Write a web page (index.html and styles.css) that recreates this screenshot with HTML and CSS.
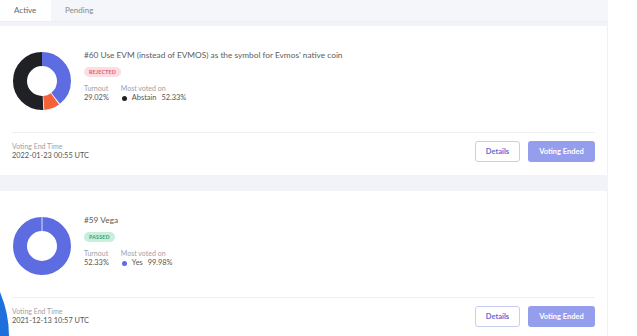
FILE: index.html
```html
<!DOCTYPE html>
<html lang="en">
<head>
  <meta charset="UTF-8">
  <title>Proposals</title>
  <link rel="stylesheet" href="styles.css">
</head>
<body>
  <div class="panel">
    <div class="tabs">
      <div class="tab active">Active</div>
      <div class="tab">Pending</div>
    </div>

    <div class="card">
      <div class="card-top">
        <svg class="donut" viewBox="0 0 58 58" width="58" height="58">
          <g transform="rotate(-90 29 29)">
            <circle cx="29" cy="29" r="22" fill="none" stroke="#5d6ce0" stroke-width="14" stroke-dasharray="54.1 84.1"></circle>
            <circle cx="29" cy="29" r="22" fill="none" stroke="#f4623a" stroke-width="14" stroke-dasharray="11.9 126.3" stroke-dashoffset="-54.9"></circle>
            <circle cx="29" cy="29" r="22" fill="none" stroke="#1f2124" stroke-width="14" stroke-dasharray="70.3 67.9" stroke-dashoffset="-67.6"></circle>
          </g>
        </svg>
        <div class="info">
          <div class="title">#60 Use EVM (instead of EVMOS) as the symbol for Evmos' native coin</div>
          <div class="badge rejected">REJECTED</div>
          <div class="stats">
            <div class="stat">
              <div class="label">Turnout</div>
              <div class="value">29.02%</div>
            </div>
            <div class="stat">
              <div class="label">Most voted on</div>
              <div class="value"><span class="dot dark"></span>Abstain<span class="pct">52.33%</span></div>
            </div>
          </div>
        </div>
      </div>
      <div class="card-foot">
        <div>
          <div class="label">Voting End Time</div>
          <div class="value">2022-01-23 00:55 UTC</div>
        </div>
        <div class="actions">
          <button class="btn outline">Details</button>
          <button class="btn filled">Voting Ended</button>
        </div>
      </div>
    </div>

    <div class="card">
      <div class="card-top">
        <svg class="donut" viewBox="0 0 58 58" width="58" height="58">
          <circle cx="29" cy="29" r="22" fill="none" stroke="#5d6ce0" stroke-width="14"></circle>
          <line x1="29" y1="0" x2="29" y2="15" stroke="#fff" stroke-width="0.8"></line>
        </svg>
        <div class="info">
          <div class="title">#59 Vega</div>
          <div class="badge passed">PASSED</div>
          <div class="stats">
            <div class="stat">
              <div class="label">Turnout</div>
              <div class="value">52.33%</div>
            </div>
            <div class="stat">
              <div class="label">Most voted on</div>
              <div class="value"><span class="dot blue"></span>Yes<span class="pct">99.98%</span></div>
            </div>
          </div>
        </div>
      </div>
      <div class="card-foot">
        <div>
          <div class="label">Voting End Time</div>
          <div class="value">2021-12-13 10:57 UTC</div>
        </div>
        <div class="actions">
          <button class="btn outline">Details</button>
          <button class="btn filled">Voting Ended</button>
        </div>
      </div>
    </div>
  </div>

  <div class="blob"></div>
</body>
</html>
```

FILE: styles.css
```css
body {
  margin: 0;
  font-family: Lato, "Open Sans", sans-serif;
  background: #fff;
  color: #555;
  overflow: hidden;
  height: 336px;
}

.panel {
  width: 608px;
  height: 336px;
  background: #f2f3f8;
  overflow: hidden;
}

.tabs {
  display: flex;
  height: 21px;
  background: #f5f6fa;
  border-bottom: 1px solid #eceef4;
  margin-bottom: 4px;
}

.tab {
  padding: 0 14px;
  line-height: 21px;
  font-size: 8px;
  color: #888;
}

.tab.active {
  background: #fff;
  color: #666;
  width: 23px;
}

.card {
  background: #fff;
  padding: 0 12px;
  margin-bottom: 16px;
  border-right: 1px solid #f0f1f6;
}

.card-top {
  display: flex;
  align-items: flex-start;
  gap: 13px;
  padding: 23px 0 22px 1px;
  border-bottom: 1px solid #eeeff3;
}

.donut {
  display: block;
  margin-top: 3px;
  flex: none;
}

.title {
  font-size: 8.3px;
  line-height: 12px;
  color: #5c5c5c;
  margin-bottom: 6px;
}

.badge {
  width: fit-content;
  font-size: 5.3px;
  font-weight: 700;
  line-height: 10px;
  padding: 0 5px;
  border-radius: 5px;
  letter-spacing: 0.2px;
}

.badge.rejected {
  background: #fcdde3;
  color: #e25a72;
}

.badge.passed {
  background: #c7efdb;
  color: #3aa478;
}

.stats {
  display: flex;
  gap: 12px;
  margin-top: 6px;
}

.label {
  font-size: 7px;
  line-height: 10px;
  color: #a0a0a6;
}

.value {
  font-size: 7.4px;
  line-height: 10px;
  color: #555;
  display: flex;
  align-items: center;
}

.dot {
  width: 5px;
  height: 5px;
  border-radius: 50%;
  margin: 0 5px 0 1px;
}

.dot.dark {
  background: #1f2124;
}

.dot.blue {
  background: #5d6ce0;
}

.pct {
  margin-left: 5px;
}

.card-foot {
  display: flex;
  justify-content: space-between;
  padding: 8px 0 13px;
}

.actions {
  display: flex;
  gap: 8px;
}

.btn {
  height: 21px;
  font-family: Lato, "Open Sans", sans-serif;
  font-size: 7.5px;
  font-weight: 700;
  border-radius: 3px;
  padding: 0;
}

.btn.outline {
  width: 45px;
  background: #fff;
  border: 1px solid #c9cdf2;
  color: #5f6bd7;
}

.btn.filled {
  width: 67px;
  background: #959ded;
  border: none;
  color: #fff;
}

.blob {
  position: absolute;
  left: -215px;
  top: 224px;
  width: 224px;
  height: 224px;
  border-radius: 50%;
  background: #1d6fdc;
}
```
